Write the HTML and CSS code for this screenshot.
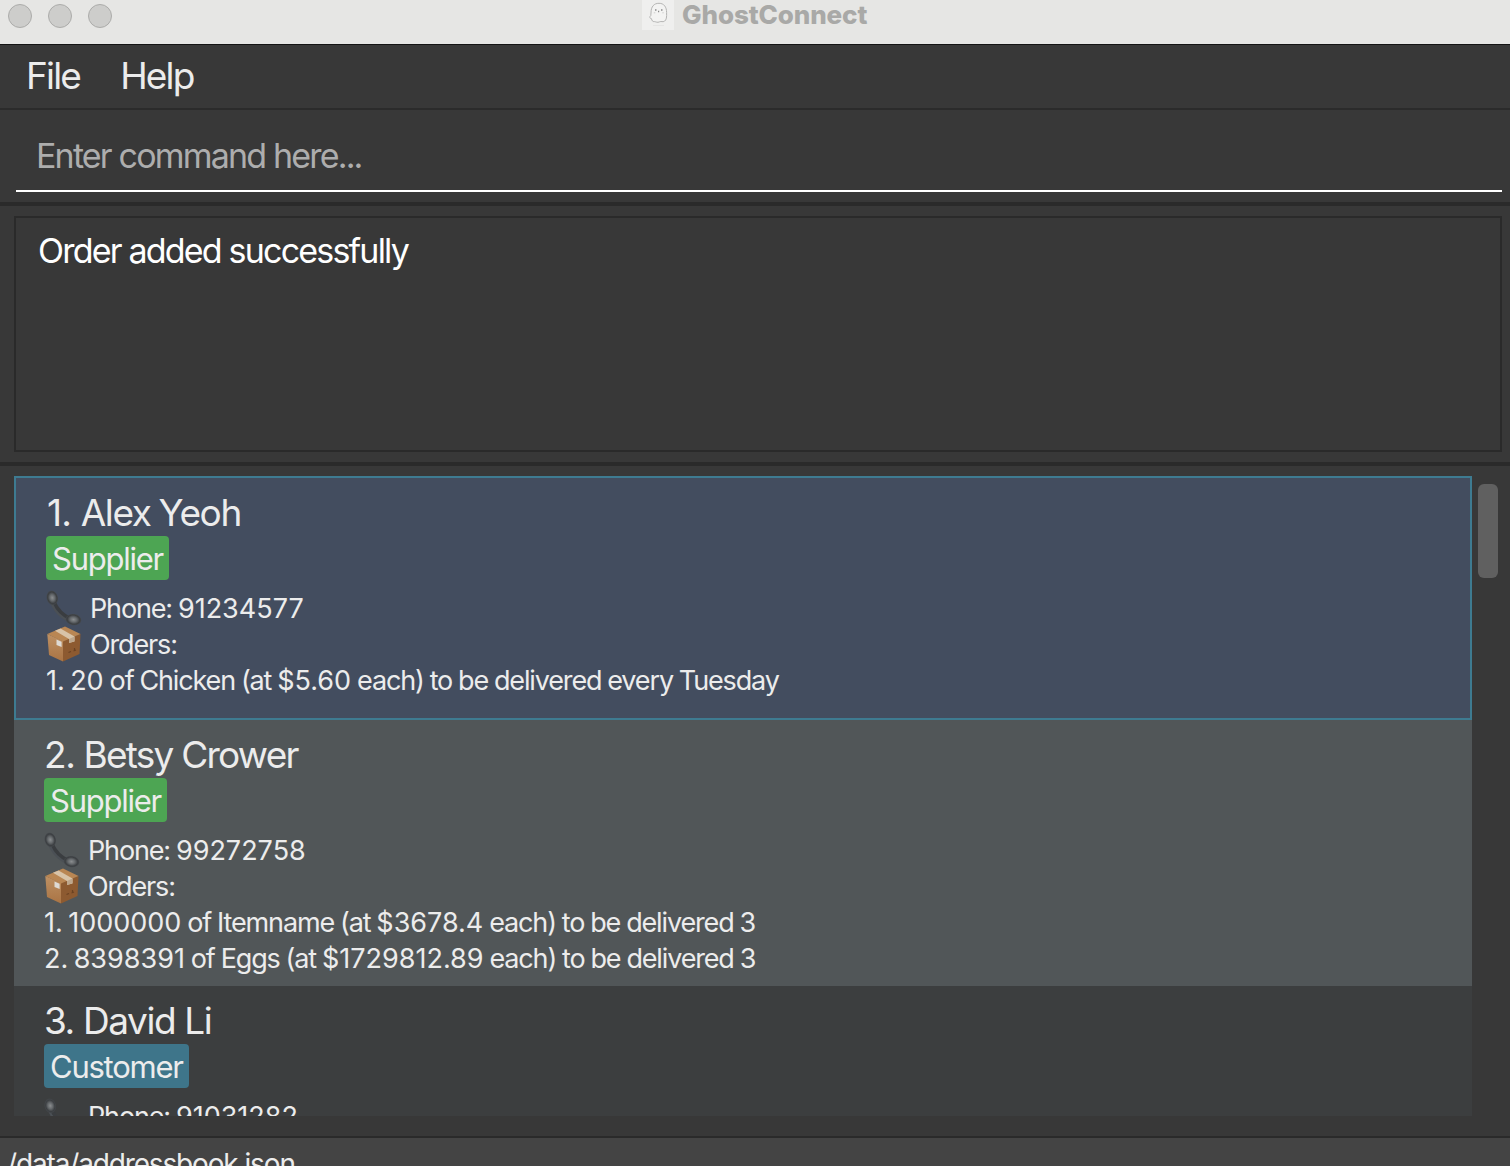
FILE: index.html
```html
<!DOCTYPE html>
<html lang="en">
<head>
<meta charset="utf-8">
<title>GhostConnect</title>
<link rel="stylesheet" href="styles.css">
</head>
<body>
<svg class="defs" width="0" height="0" aria-hidden="true">
  <defs>
    <linearGradient id="boxL" x1="0" y1="0" x2="0" y2="1"><stop offset="0" stop-color="#bd9063"/><stop offset="1" stop-color="#aa7444"/></linearGradient>
    <radialGradient id="cap"><stop offset="0" stop-color="#8b8e90"/><stop offset=".45" stop-color="#64686b"/><stop offset=".8" stop-color="#3c3f42"/><stop offset="1" stop-color="#44484c"/></radialGradient>
    <symbol id="phone" viewBox="0 0 36 36">
      <path d="M5 11C7.500 20 15 28 25 31.500" fill="none" stroke="#4b5055" stroke-width="2.500"/>
      <path d="M8 12C11 19 17 25.500 25 29" fill="none" stroke="#3a3d40" stroke-width="3.400"/>
      <ellipse cx="6.300" cy="7.800" rx="5.600" ry="7.200" transform="rotate(-14 6.300 7.800)" fill="url(#cap)"/>
      <ellipse cx="27.500" cy="29.600" rx="7.800" ry="5.600" transform="rotate(8 27.500 29.600)" fill="url(#cap)"/>
    </symbol>
    <symbol id="box" viewBox="0 0 36 36">
      <path d="M1.300 8L17 15V35.500L3 29Z" fill="url(#boxL)"/>
      <path d="M17 15L34.500 8L33.500 28L17 35.500Z" fill="#8d5a30"/>
      <path d="M1.300 8L19 .6L34.500 8L17 15.500Z" fill="#b98653"/>
      <path d="M9 4.800L14.500 2.500L28.500 10.400V15.500L23 17V13Z" fill="#d8c3a8"/>
      <path d="M23 13L28.500 10.600V15.200L23 17Z" fill="#bda78d"/>
      <path d="M10.500 13.500L15.600 15.700V21L10.500 19Z" fill="#dedad4"/>
      <path d="M22.500 26.500L25 25.500M27.500 25L30 24M28.500 22V25" stroke="#6a4222" stroke-width="1.200"/>
    </symbol>
  </defs>
</svg>
<div class="window">
  <header class="titlebar">
    <div class="lights"><i></i><i></i><i></i></div>
    <div class="title">
      <svg class="ghost" viewBox="0 0 32 30"><rect width="32" height="30" fill="#efefee"/><path d="M9 13C9 6.500 12 3.300 17 3.300S24.600 7 24.600 12.500C24.800 17 24.500 20 22.500 21.200C20.500 22.300 19.500 21 17.500 21.800C15.500 23 13.500 21.600 12.500 21.600C10.500 21.800 9.800 20.500 9.500 18.700C7.500 18.600 7.400 16.500 8.800 15.500Z" fill="#f3f3f2" stroke="#b4b4b3" stroke-width="1"/><path d="M13 10h1.500M19 10h1.500M16 11.500h1.200" stroke="#8a8a8a" stroke-width="1.500"/><path d="M11.800 12.800h1.500M20.300 12.800h1.500" stroke="#cfcfce"/><path d="M11 25.500h11" stroke="#e5e5e4"/></svg>
      <span class="title-text">GhostConnect</span>
    </div>
  </header>
  <nav class="menu"><span>File</span><span>Help</span></nav>
  <section class="command"><div class="field">Enter command here...</div></section>
  <section class="result"><div class="result-box">Order added successfully</div></section>
  <section class="people">
    <div class="list">
      <article class="card selected">
        <h2 class="name"><span class="index first">1. </span>Alex Yeoh</h2>
        <span class="tag supplier">Supplier</span>
        <div class="row"><svg class="icon"><use href="#phone"/></svg><span>Phone: </span><span class="num">91234577</span></div>
        <div class="row"><svg class="icon"><use href="#box"/></svg><span>Orders:</span></div>
        <div class="row"><span><span class="num">1. 20</span> of Chicken (at <span class="num">$5.60</span> each) to be delivered every Tuesday</span></div>
      </article>
      <article class="card even">
        <h2 class="name"><span class="index">2. </span>Betsy Crower</h2>
        <span class="tag supplier">Supplier</span>
        <div class="row"><svg class="icon"><use href="#phone"/></svg><span>Phone: </span><span class="num">99272758</span></div>
        <div class="row"><svg class="icon"><use href="#box"/></svg><span>Orders:</span></div>
        <div class="row"><span><span class="num">1. 1000000</span> of Itemname (at <span class="num">$3678.4</span> each) to be delivered 3</span></div>
        <div class="row"><span><span class="num">2. 8398391</span> of Eggs (at <span class="num">$1729812.89</span> each) to be delivered 3</span></div>
      </article>
      <article class="card odd">
        <h2 class="name"><span class="index">3. </span>David Li</h2>
        <span class="tag customer">Customer</span>
        <div class="row"><svg class="icon"><use href="#phone"/></svg><span>Phone: </span><span class="num">91031282</span></div>
      </article>
    </div>
    <div class="scroll"><div class="thumb"></div></div>
  </section>
  <footer class="status">/data/addressbook.json</footer>
</div>
</body>
</html>
```
FILE: styles.css
```css
* { box-sizing: border-box; }
body { margin: 0; background: #383838; font-family: Inter, "Liberation Sans", sans-serif; color: #ececec; }
.defs { display: block; height: 0; }
.window { width: 1510px; height: 1166px; overflow: hidden; display: flex; flex-direction: column; }
.window > * { flex: none; }
.titlebar { height: 45px; background: #e6e6e4; border-bottom: 1px solid #141414; display: grid; grid-template-columns: 642px 1fr; align-items: start; }
.lights { display: flex; gap: 16px; padding: 4px 0 0 8px; }
.lights i { width: 24px; height: 24px; border-radius: 50%; background: #cdcdcb; border: 1px solid #acacaa; }
.title { display: flex; gap: 8px; }
.ghost { width: 32px; height: 30px; }
.title-text { font-size: 26px; line-height: 29px; font-weight: 800; color: #a9a9a7; letter-spacing: -0.1px; white-space: nowrap; }
.menu { height: 65px; border-bottom: 2px solid #2b2b2b; display: flex; gap: 40px; padding-left: 26px; font-size: 37px; line-height: 61px; letter-spacing: -1.8px; }
.command { height: 96px; padding: 0 8px 0 16px; border-bottom: 4px solid #2a2a2a; }
.field { height: 82px; border-bottom: 2px solid #fff; padding-left: 20px; font-size: 34px; line-height: 92px; letter-spacing: -1.82px; color: #adadad; }
.result { height: 260px; padding: 10px 8px 10px 14px; border-bottom: 4px solid #2a2a2a; }
.result-box { height: 236px; border: 2px solid #2a2a2a; padding: 0 22px; font-size: 34px; line-height: 66px; letter-spacing: -1.8px; color: #fff; }
.people { height: 670px; padding: 10px 0 0 14px; display: flex; }
.list { width: 1458px; height: 640px; overflow: hidden; }
.card { padding: 14px 0 0 30px; white-space: nowrap; }
.selected { height: 244px; background: #434d5f; border: 2px solid #3e7b91; }
.even { height: 266px; background: #515658; }
.odd { height: 266px; background: #3c3e3f; }
.name { margin: 0; height: 44px; font-size: 37px; line-height: 42px; font-weight: 400; letter-spacing: -1.75px; white-space: pre; }
.odd .name { letter-spacing: -1.4px; }
.selected .name { letter-spacing: -1.4px; word-spacing: -1px; }
.index { letter-spacing: -1.4px; }
.index.first { letter-spacing: -0.8px; padding-left: 1px; word-spacing: 0; }
.tag { display: block; height: 44px; width: 123px; margin-bottom: 10px; padding-left: 6px; border-radius: 4px; font-size: 31px; line-height: 46px; letter-spacing: -1.25px; }
.supplier { background: #4da553; }
.customer { background: #3e758a; width: 145px; }
.row { height: 36px; display: flex; font-size: 27px; line-height: 38px; letter-spacing: -1.15px; word-spacing: -0.5px; white-space: pre; }
.num { letter-spacing: 0; word-spacing: -2.2px; }
.icon { width: 36px; height: 36px; margin-right: 8px; }
.scroll { padding: 8px 0 0 6px; }
.thumb { width: 20px; height: 94px; border-radius: 6px; background: #606060; }
.status { height: 30px; overflow: hidden; border-top: 2px solid #2a2a2a; background: #444; padding-left: 7px; font-size: 28px; line-height: 52px; letter-spacing: -1.15px; }
```
